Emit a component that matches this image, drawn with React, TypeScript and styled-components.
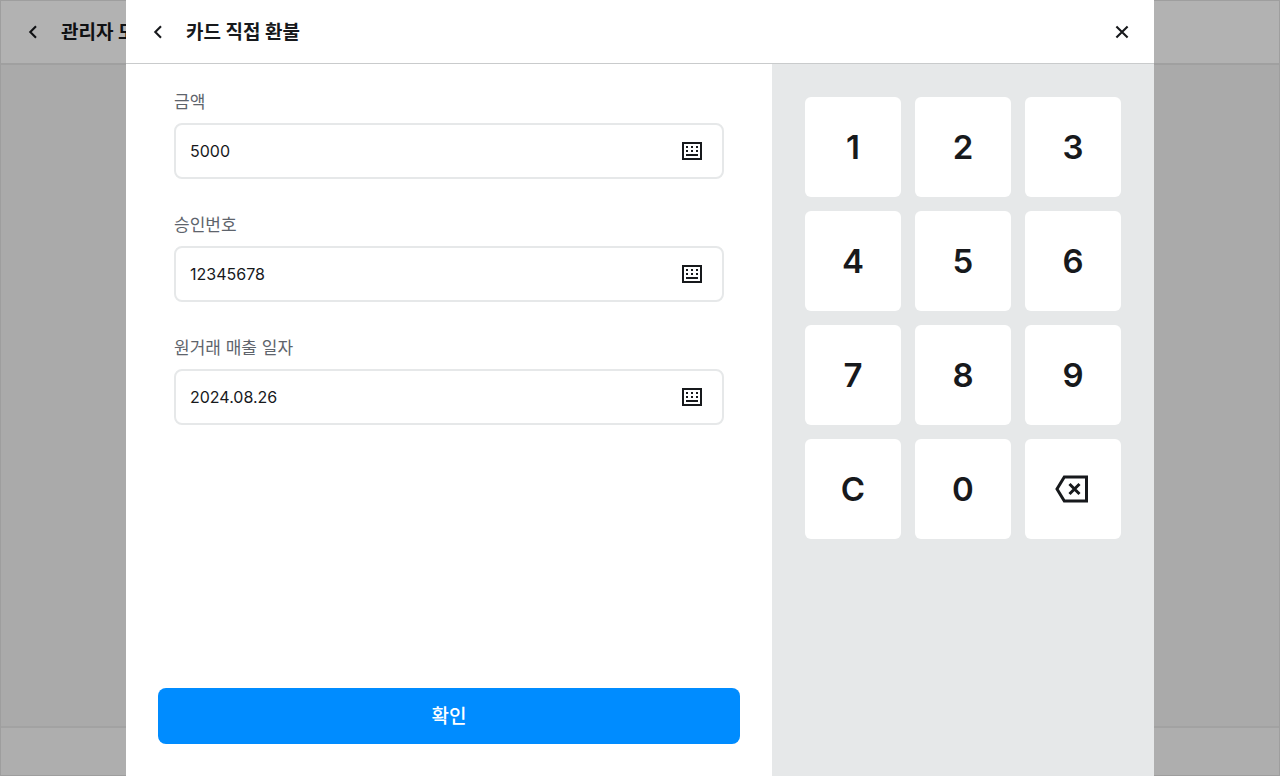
import React, { useState } from "react";
import styled, { createGlobalStyle } from "styled-components";

const GlobalStyle = createGlobalStyle`
  *, *::before, *::after { box-sizing: border-box; }
  body {
    margin: 0;
    color: #17191c;
    font-family: Inter, "Noto Sans CJK KR", sans-serif;
  }
  button, input { font-family: inherit; color: inherit; }
`;

const Page = styled.div`
  display: flex;
  flex-direction: column;
  min-height: 100vh;
  background: #f4f4f4;
  border: 1px solid #e2e2e2;
`;

const PageHeader = styled.header`
  display: flex;
  align-items: center;
  gap: 16px;
  height: 64px;
  padding: 0 20px;
  background: #ffffff;
  border-bottom: 2px solid #e6e6e6;
`;

const PageBody = styled.main`
  flex: 1;
`;

const PageFooter = styled.footer`
  height: 49px;
  background: #f9f9f9;
  border-top: 2px solid #e9e9e9;
`;

const Overlay = styled.div`
  position: fixed;
  inset: 0;
  display: flex;
  padding: 0 126px;
  background: rgba(0, 0, 0, 0.3);
`;

const Dialog = styled.section`
  display: flex;
  flex: 1;
  flex-direction: column;
  min-width: 0;
  background: #ffffff;
`;

const DialogHeader = styled.header`
  display: flex;
  align-items: center;
  gap: 16px;
  height: 64px;
  padding: 0 20px;
  border-bottom: 1px solid #c9cbcc;
`;

const Title = styled.h2`
  flex: 1;
  margin: 0;
  padding-top: 2px;
  font-size: 19px;
  font-weight: 700;
  line-height: 28px;
  white-space: nowrap;
`;

const IconButton = styled.button`
  display: flex;
  padding: 0;
  border: 0;
  background: none;
  cursor: pointer;
`;

const Columns = styled.div`
  display: flex;
  flex: 1;
  min-height: 0;
`;

const Form = styled.form`
  display: flex;
  flex: 1;
  flex-direction: column;
  justify-content: space-between;
  min-width: 0;
  padding: 26px 32px 32px;
`;

const Fields = styled.div`
  display: flex;
  flex-direction: column;
  gap: 34px;
  padding: 0 16px;
`;

const Field = styled.div`
  display: flex;
  flex-direction: column;
  gap: 9px;
`;

const Label = styled.label`
  color: #5e646c;
  font-size: 17px;
  line-height: 24px;
`;

const InputBox = styled.div`
  display: flex;
  align-items: center;
  height: 56px;
  padding: 0 18px 0 14px;
  border: 2px solid #e6e8e9;
  border-radius: 8px;
`;

const TextInput = styled.input`
  flex: 1;
  min-width: 0;
  padding: 0;
  border: 0;
  outline: 0;
  background: none;
  font-size: 16px;
  line-height: 24px;
`;

const SubmitButton = styled.button`
  height: 56px;
  padding: 2px 0 0;
  border: 0;
  border-radius: 8px;
  background: #008cff;
  color: #ffffff;
  font-size: 19px;
  font-weight: 500;
  line-height: 28px;
  cursor: pointer;
`;

const KeypadPanel = styled.aside`
  width: 382px;
  padding: 33px;
  background: #e6e8e9;
`;

const Keypad = styled.div`
  display: grid;
  grid-template-columns: repeat(3, 1fr);
  grid-auto-rows: 100px;
  gap: 14px;
`;

const Key = styled.button`
  display: flex;
  align-items: center;
  justify-content: center;
  padding: 0;
  border: 0;
  border-radius: 6px;
  background: #ffffff;
  font-size: 33px;
  font-weight: 600;
  line-height: 40px;
  cursor: pointer;
`;

const ChevronIcon = () => (
  <svg width="24" height="24" viewBox="0 0 24 24" fill="none" stroke="#17191c" strokeWidth="2.1" aria-hidden="true">
    <path d="M15 6.3 9.3 12l5.7 5.7" />
  </svg>
);

const CloseIcon = () => (
  <svg width="24" height="24" viewBox="0 0 24 24" fill="none" stroke="#17191c" strokeWidth="2.1" aria-hidden="true">
    <path d="m6.4 6.4 11.2 11.2M17.6 6.4 6.4 17.6" />
  </svg>
);

const KeyboardIcon = () => (
  <svg width="24" height="24" viewBox="0 0 24 24" fill="#17191c" aria-hidden="true">
    <path fillRule="evenodd" d="M2 3h20v18H2zM4 5v14h16V5z" />
    <path d="M6 7h2v2H6zM11 7h2v2h-2zM16 7h2v2h-2zM6 11h2v2H6zM11 11h2v2h-2zM16 11h2v2h-2zM6 15h12v2H6z" />
  </svg>
);

const BackspaceIcon = () => (
  <svg width="36" height="36" viewBox="0 0 36 36" fill="none" stroke="#17191c" strokeWidth="3" aria-hidden="true">
    <path d="M9.3 6h22.2v24H9.3L2 18z" />
    <path d="m14.5 13 10 10M24.5 13l-10 10" />
  </svg>
);

const fieldList = [
  { id: "amount", label: "금액", initial: "5000" },
  { id: "approval", label: "승인번호", initial: "12345678" },
  { id: "date", label: "원거래 매출 일자", initial: "2024.08.26" },
];

const keys = ["1", "2", "3", "4", "5", "6", "7", "8", "9", "C", "0", "back"];

export default function App() {
  const [values, setValues] = useState(fieldList.map((f) => f.initial));
  const [active, setActive] = useState(0);

  const update = (index: number, value: string) =>
    setValues((prev) => prev.map((v, i) => (i === index ? value : v)));

  const press = (key: string) => {
    const current = values[active];
    if (key === "C") update(active, "");
    else if (key === "back") update(active, current.slice(0, -1));
    else update(active, current + key);
  };

  return (
    <>
      <GlobalStyle />
      <Page>
        <PageHeader>
          <IconButton type="button" aria-label="이전">
            <ChevronIcon />
          </IconButton>
          <Title as="h1">관리자 모드</Title>
        </PageHeader>
        <PageBody />
        <PageFooter />
      </Page>
      <Overlay>
        <Dialog role="dialog" aria-modal="true" aria-labelledby="dialog-title">
          <DialogHeader>
            <IconButton type="button" aria-label="뒤로">
              <ChevronIcon />
            </IconButton>
            <Title id="dialog-title">카드 직접 환불</Title>
            <IconButton type="button" aria-label="닫기">
              <CloseIcon />
            </IconButton>
          </DialogHeader>
          <Columns>
            <Form onSubmit={(e) => e.preventDefault()}>
              <Fields>
                {fieldList.map((field, i) => (
                  <Field key={field.id}>
                    <Label htmlFor={field.id}>{field.label}</Label>
                    <InputBox>
                      <TextInput
                        id={field.id}
                        type="text"
                        inputMode="numeric"
                        value={values[i]}
                        onFocus={() => setActive(i)}
                        onChange={(e) => update(i, e.target.value)}
                      />
                      <IconButton type="button" aria-label={`${field.label} 키패드`} onClick={() => setActive(i)}>
                        <KeyboardIcon />
                      </IconButton>
                    </InputBox>
                  </Field>
                ))}
              </Fields>
              <SubmitButton type="submit">확인</SubmitButton>
            </Form>
            <KeypadPanel>
              <Keypad>
                {keys.map((key) => (
                  <Key
                    key={key}
                    type="button"
                    aria-label={key === "back" ? "지우기" : undefined}
                    onClick={() => press(key)}
                  >
                    {key === "back" ? <BackspaceIcon /> : key}
                  </Key>
                ))}
              </Keypad>
            </KeypadPanel>
          </Columns>
        </Dialog>
      </Overlay>
    </>
  );
}
